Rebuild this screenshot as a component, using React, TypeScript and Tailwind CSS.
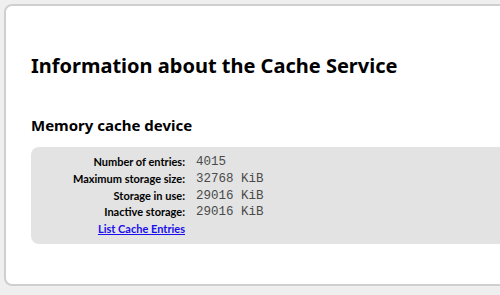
const rows = [
  { label: "Number of entries:", value: "4015" },
  { label: "Maximum storage size:", value: "32768 KiB" },
  { label: "Storage in use:", value: "29016 KiB" },
  { label: "Inactive storage:", value: "29016 KiB" },
];

const App = () => {
  return (
    <div className="w-[500px] h-[295px] overflow-hidden bg-[#efefef] pt-1 pl-1 font-['Noto_Sans',sans-serif] text-black">
      {/* Tarjeta principal */}
      <div className="w-[520px] h-[282px] bg-white border-2 border-[#cfcfcf] rounded-lg pl-[25px] pt-[46px]">
        <h1 className="text-[20px] leading-[28px] font-bold">Information about the Cache Service</h1>

        <h2 className="mt-[34px] text-[15px] leading-[22px] font-bold">Memory cache device</h2>

        {/* Datos de la caché */}
        <div className="mt-[11px] bg-[#e3e3e3] rounded-lg pt-[7px] pb-[6px]">
          <div className="grid grid-cols-[154px_auto] gap-x-[11px] items-center">
            {rows.map((row) => (
              <div key={row.label} className="contents">
                <span className="text-right font-['Lato',sans-serif] text-[11px] leading-[16.75px] font-bold">
                  {row.label}
                </span>
                <span className="font-['Liberation_Mono',monospace] text-[12.5px] leading-[16.75px] text-[#4a4a4a]">
                  {row.value}
                </span>
              </div>
            ))}
            <span className="text-right font-['Lato',sans-serif] text-[11px] leading-[16.75px] font-bold">
              <a href="#" className="text-[#1a0dee] underline">List Cache Entries</a>
            </span>
            <span />
          </div>
        </div>
      </div>
    </div>
  );
};

export default App;
